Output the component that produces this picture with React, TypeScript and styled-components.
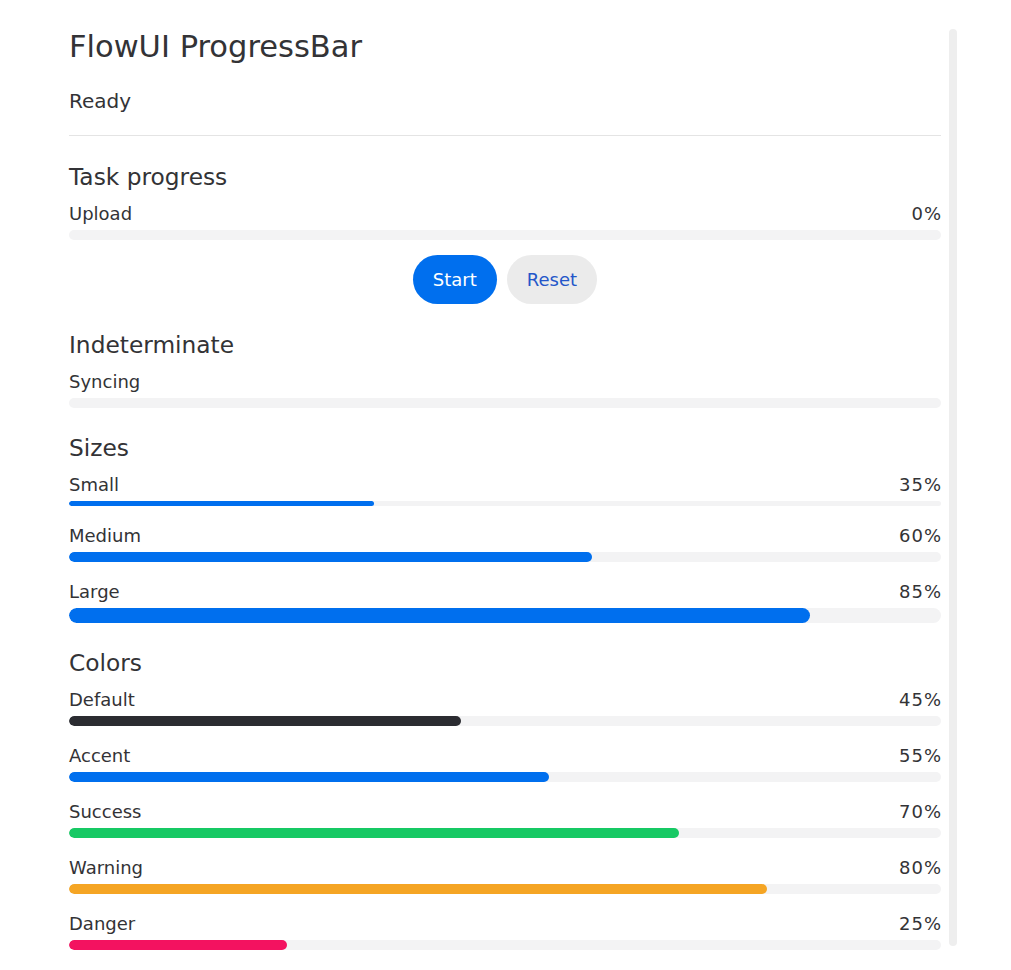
import React from 'react'
import styled, { createGlobalStyle } from 'styled-components'

type BarSize = 'sm' | 'md' | 'lg'
type BarColor = 'default' | 'accent' | 'success' | 'warning' | 'danger'

const barHeights: Record<BarSize, number> = { sm: 5, md: 10, lg: 15 }

const barColors: Record<BarColor, string> = {
  default: '#2b2c31',
  accent: '#006fee',
  success: '#17c964',
  warning: '#f5a524',
  danger: '#f31260',
}

interface ProgressRowProps {
  label: string
  value?: number
  size?: BarSize
  color?: BarColor
  showValue?: boolean
}

const ProgressRow: React.FC<ProgressRowProps> = ({
  label,
  value = 0,
  size = 'md',
  color = 'accent',
  showValue = true,
}) => (
  <Row>
    <RowHead>
      <Label>{label}</Label>
      {showValue && <Value>{value}%</Value>}
    </RowHead>
    <Track $size={size}>
      {value > 0 && <Fill $color={color} style={{ width: `${value}%` }} />}
    </Track>
  </Row>
)

const App: React.FC = () => {
  return (
    <>
      <GlobalStyle />
      <Page>
        <Content>
          <Title>FlowUI ProgressBar</Title>
          <Status>Ready</Status>
          <Divider />

          <Section>
            <Heading>Task progress</Heading>
            <ProgressRow label="Upload" value={0} />
            <Actions>
              <Button $primary>Start</Button>
              <Button>Reset</Button>
            </Actions>
          </Section>

          <Section>
            <Heading>Indeterminate</Heading>
            <ProgressRow label="Syncing" showValue={false} />
          </Section>

          <Section $top={26}>
            <Heading>Sizes</Heading>
            <ProgressRow label="Small" value={35} size="sm" />
            <ProgressRow label="Medium" value={60} size="md" />
            <ProgressRow label="Large" value={85} size="lg" />
          </Section>

          <Section $top={26}>
            <Heading>Colors</Heading>
            <ProgressRow label="Default" value={45} color="default" />
            <ProgressRow label="Accent" value={55} color="accent" />
            <ProgressRow label="Success" value={70} color="success" />
            <ProgressRow label="Warning" value={80} color="warning" />
            <ProgressRow label="Danger" value={25} color="danger" />
          </Section>
        </Content>
        <ScrollBar />
      </Page>
    </>
  )
}

export default App

const GlobalStyle = createGlobalStyle`
  html, body {
    margin: 0;
    padding: 0;
    background: #ffffff;
  }
  body {
    font-family: "DejaVu Sans", Verdana, sans-serif;
    color: #333336;
  }
`

const Page = styled.div`
  display: flex;
  align-items: flex-start;
  gap: 8px;
  padding: 29px 0 0 69px;
`

const Content = styled.div`
  width: 872px;
  display: flex;
  flex-direction: column;
`

const ScrollBar = styled.div`
  width: 8px;
  height: 917px;
  border-radius: 4px;
  background: #eeeeee;
  flex-shrink: 0;
`

const Title = styled.h1`
  margin: 0;
  font-size: 30.5px;
  font-weight: 400;
  line-height: 36px;
`

const Status = styled.div`
  margin-top: 23px;
  font-size: 20px;
  line-height: 27px;
`

const Divider = styled.hr`
  margin: 20px 0 0;
  border: 0;
  border-top: 1px solid #e4e4e4;
  height: 0;
`

const Section = styled.section<{ $top?: number }>`
  display: flex;
  flex-direction: column;
  gap: 18px;
  margin-top: ${(p) => p.$top ?? 27}px;
`

const Heading = styled.h2`
  margin: 1px 0 -6px;
  font-size: 23.3px;
  font-weight: 400;
  line-height: 26px;
`

const Row = styled.div`
  display: flex;
  flex-direction: column;
  gap: 4px;
`

const RowHead = styled.div`
  display: flex;
  justify-content: space-between;
  align-items: baseline;
  font-size: 18px;
  line-height: 24px;
`

const Label = styled.span``

const Value = styled.span`
  letter-spacing: 1px;
  margin-right: -1px;
`

const Track = styled.div<{ $size: BarSize }>`
  height: ${(p) => barHeights[p.$size]}px;
  border-radius: ${(p) => barHeights[p.$size] / 2}px;
  background: #f3f3f4;
  overflow: hidden;
`

const Fill = styled.div<{ $color: BarColor }>`
  height: 100%;
  border-radius: inherit;
  background: ${(p) => barColors[p.$color]};
`

const Actions = styled.div`
  display: flex;
  justify-content: center;
  gap: 10px;
  margin-top: -3px;
`

const Button = styled.button<{ $primary?: boolean }>`
  height: 49px;
  padding: 0 20px;
  border: 0;
  border-radius: 25px;
  font-family: inherit;
  font-size: 18px;
  cursor: pointer;
  background: ${(p) => (p.$primary ? '#006fee' : '#ebebeb')};
  color: ${(p) => (p.$primary ? '#ffffff' : '#2456c9')};
`
